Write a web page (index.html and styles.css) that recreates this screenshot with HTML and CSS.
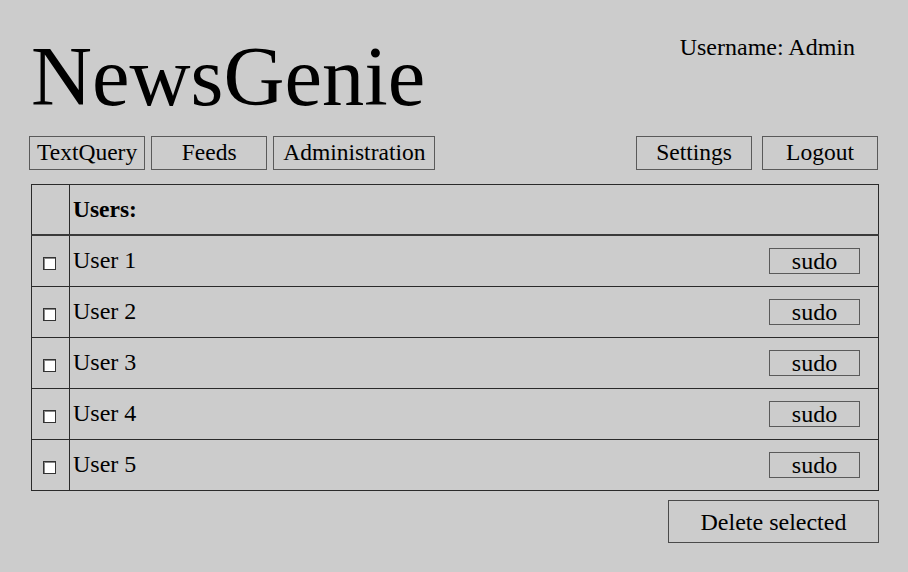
FILE: index.html
```html
<!DOCTYPE html>
<html>
<head>
<meta charset="utf-8">
<link rel="stylesheet" href="styles.css">
</head>
<body>
<div class="page">
  <header class="top">
    <h1 class="logo">NewsGenie</h1>
    <div class="user">Username: Admin</div>
  </header>
  <nav class="nav">
    <div class="nav-left">
      <button class="btn">TextQuery</button>
      <button class="btn">Feeds</button>
      <button class="btn wide">Administration</button>
    </div>
    <div class="nav-right">
      <button class="btn">Settings</button>
      <button class="btn">Logout</button>
    </div>
  </nav>
  <table class="users">
    <thead>
      <tr><th class="sel"></th><th class="name">Users:</th></tr>
    </thead>
    <tbody>
      <tr><td class="sel"><span class="check"></span></td><td class="name"><div class="cell"><span>User 1</span><button class="sudo">sudo</button></div></td></tr>
      <tr><td class="sel"><span class="check"></span></td><td class="name"><div class="cell"><span>User 2</span><button class="sudo">sudo</button></div></td></tr>
      <tr><td class="sel"><span class="check"></span></td><td class="name"><div class="cell"><span>User 3</span><button class="sudo">sudo</button></div></td></tr>
      <tr><td class="sel"><span class="check"></span></td><td class="name"><div class="cell"><span>User 4</span><button class="sudo">sudo</button></div></td></tr>
      <tr><td class="sel"><span class="check"></span></td><td class="name"><div class="cell"><span>User 5</span><button class="sudo">sudo</button></div></td></tr>
    </tbody>
  </table>
  <div class="actions">
    <button class="delete">Delete selected</button>
  </div>
</div>
</body>
</html>
```
FILE: styles.css
```css
html, body {
  margin: 0;
  padding: 0;
  background: #cccccc;
}
body {
  font-family: "Liberation Serif", "Times New Roman", serif;
  color: #000;
  width: 908px;
  height: 572px;
  overflow: hidden;
}
.page {
  width: 848px;
  margin-left: 30px;
}
.top {
  display: flex;
  justify-content: space-between;
  align-items: flex-start;
  height: 136px;
}
.logo {
  margin: 35px 0 0 1px;
  font-size: 84.5px;
  font-weight: normal;
  line-height: 1;
}
.user {
  margin: 33px 23px 0 0;
  font-size: 24px;
  line-height: 1.2;
}
.nav {
  display: flex;
  justify-content: space-between;
  margin-left: -1px;
  height: 34px;
}
.nav-left {
  display: flex;
  gap: 6px;
}
.nav-right {
  display: flex;
  gap: 10px;
}
.btn {
  font-family: inherit;
  font-size: 23.5px;
  color: #000;
  background: #cccccc;
  border: 1px solid #5a5a5a;
  min-width: 116px;
  height: 34px;
  padding: 0 7px;
  margin: 0;
  line-height: 1;
}
.btn.wide {
  padding: 0 9px;
}
.users {
  margin-top: 14px;
  margin-left: 1px;
  width: 848px;
  border-collapse: collapse;
  border: 1px solid #2a2a2a;
  font-size: 24px;
}
.users th, .users td {
  border: 1px solid #2a2a2a;
  padding: 0;
  height: 50px;
  text-align: left;
}
.users thead th {
  height: 49px;
  border-bottom: 2px solid #3a3a3a;
}
.users .sel {
  width: 37px;
  text-align: center;
}
.users th.name {
  padding-left: 3px;
  font-weight: bold;
  font-size: 23.5px;
}
.users td.name {
  padding-left: 3px;
}
.cell {
  display: flex;
  justify-content: space-between;
  align-items: center;
}
.cell span {
  position: relative;
  top: -1px;
}
.check {
  display: inline-block;
  width: 11px;
  height: 11px;
  margin-right: 2px;
  background: #fff;
  border: 1px solid #333;
  box-shadow: inset 1px 1px 0 #888;
  vertical-align: middle;
  position: relative;
  top: 1px;
}
.sudo {
  font-family: inherit;
  font-size: 24px;
  color: #000;
  background: #cccccc;
  border: 1px solid #5a5a5a;
  width: 91px;
  height: 26px;
  padding: 0;
  margin-right: 18px;
  line-height: 1;
}
.actions {
  display: flex;
  justify-content: flex-end;
  margin-top: 9px;
  margin-right: -1px;
}
.delete {
  font-family: inherit;
  font-size: 24px;
  color: #000;
  background: #cccccc;
  border: 1px solid #4a4a4a;
  width: 211px;
  height: 43px;
  padding: 0;
  line-height: 1;
}
```
